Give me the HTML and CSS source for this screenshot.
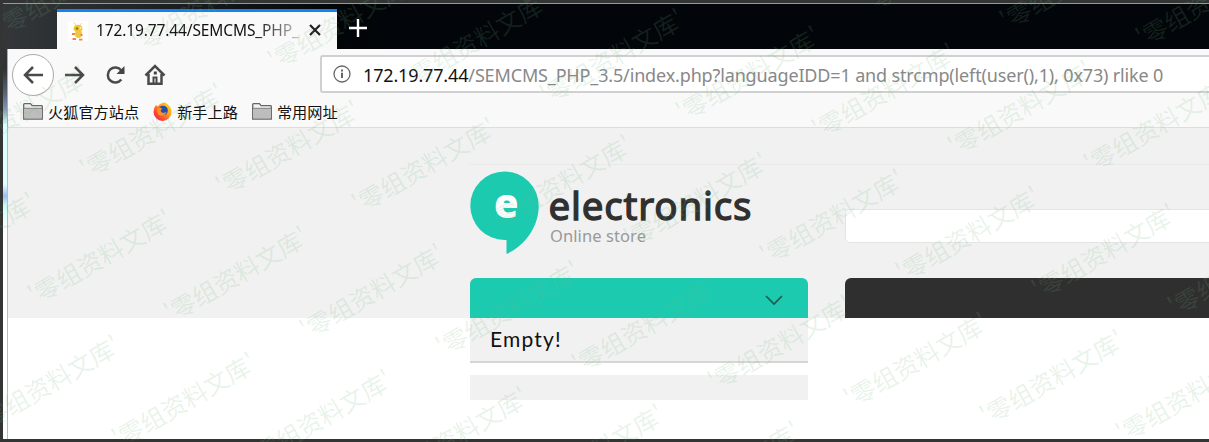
FILE: index.html
```html
<!DOCTYPE html>
<html lang="zh-CN">
<head>
<meta charset="utf-8">
<title>electronics</title>
<link rel="stylesheet" href="styles.css">
</head>
<body>
<div class="desktop">
  <div class="window">
    <div class="tabbar">
      <div class="tab">
        <svg class="favicon" width="20" height="20" viewBox="0 0 20 20">
          <rect width="20" height="20" fill="#fff"/>
          <path d="M8 5 6 1M11 5l3-3" stroke="#ddd6bb" fill="none"/>
          <ellipse cx="10" cy="7.500" rx="4.500" ry="3.800" fill="#f3c52f"/>
          <ellipse cx="10.500" cy="13" rx="3.500" ry="4" fill="#edc744"/>
          <circle cx="9" cy="7.500" r="1.300" fill="#8c7a20"/>
          <circle cx="12.500" cy="7" r="1" fill="#fff3b0"/>
          <path d="M4 13h3M12.500 14h2M4.500 18h3.500M11 18.700h3.500" stroke="#f08448" stroke-width="1.800"/>
        </svg>
        <span class="tab-title">172.19.77.44/SEMCMS_PHP_</span>
        <svg class="tab-close" width="14" height="14" viewBox="0 0 14 14"><path d="M2 2l10 10M12 2 2 12" stroke="#222" stroke-width="2.200"/></svg>
      </div>
      <svg class="newtab" width="18" height="18" viewBox="0 0 18 18"><path d="M9 0v18M0 9h18" stroke="#fff" stroke-width="2.400"/></svg>
    </div>
    <div class="toolbar">
      <div class="nav">
        <span class="back"><svg width="22" height="20" viewBox="0 0 22 20"><path d="M21 10H3M11 2 3 10l8 8" class="line"/></svg></span>
        <svg class="forward" width="22" height="20" viewBox="0 0 22 20"><path d="M1 10h18M11 2l8 8-8 8" class="line"/></svg>
        <svg class="reload" width="20" height="20" viewBox="0 0 20 20"><path d="M16.300 5.400A7.500 7.500 0 1 0 16.300 14.500" class="line"/><path d="M19.500 1v8h-8z" fill="#444"/></svg>
        <svg class="home" width="22" height="22" viewBox="0 0 22 22"><path d="M1.500 11.500 11 2l9.500 9.500M4.500 10v9.700h13V10" class="line"/><path d="M9.500 19v-5.500h3V19" class="line thin"/><rect x="9.800" y="7.500" width="3" height="3" fill="#444"/></svg>
      </div>
      <div class="urlbar">
        <svg width="18" height="18" viewBox="0 0 18 18"><circle cx="9" cy="9" r="8" fill="none" stroke="#666" stroke-width="1.300"/><path d="M9 7.700V13M9 4.500v2" stroke="#555" stroke-width="1.800"/></svg>
        <span class="url"><b>172.19.77.44</b>/SEMCMS_PHP_3.5/index.php?languageIDD=1 and strcmp(left(user(),1), 0x73) rlike 0</span>
      </div>
    </div>
    <div class="bookmarks">
      <span class="bm"><svg width="20" height="17" viewBox="0 0 20 17"><path d="M.7 16V1.500q0-.8.8-.8h6l1.500 2h9.500q.8 0 .8.800V16z" fill="#f2f2f2" stroke="#666" stroke-width="1.300"/><path d="M1.500 6h17v9.500h-17z" fill="#bdbdbd"/><path d="M1 5.300h18" stroke="#777"/></svg>火狐官方站点</span>
      <span class="bm fox"><svg width="19" height="19" viewBox="0 0 19 19"><defs><linearGradient id="fire" x1="1" y1="0" x2="0" y2="1"><stop offset="0" stop-color="#ffe226"/><stop offset=".4" stop-color="#ff9a1c"/><stop offset=".75" stop-color="#ff3b36"/><stop offset="1" stop-color="#e5217b"/></linearGradient></defs><path d="M3 3 4.500 4.500Q8 .5 12 .5q6.500 3.500 6.500 9.500A9 9 0 0 1 .5 10Q.5 6 3 3" fill="url(#fire)"/><circle cx="10" cy="8.500" r="4.800" fill="#234fa4"/><path d="M4.500 6q3-1.500 5 1-3 1-1 3t5-.5q-1.500 5-6 4T4.500 6" fill="#ff9025"/></svg>新手上路</span>
      <span class="bm"><svg width="20" height="17" viewBox="0 0 20 17"><path d="M.7 16V1.500q0-.8.8-.8h6l1.500 2h9.500q.8 0 .8.800V16z" fill="#f2f2f2" stroke="#666" stroke-width="1.300"/><path d="M1.500 6h17v9.500h-17z" fill="#bdbdbd"/><path d="M1 5.300h18" stroke="#777"/></svg>常用网址</span>
    </div>
    <div class="page">
      <div class="header">
        <div class="header-left">
          <svg class="logo" width="300" height="90" viewBox="0 0 300 90">
            <path d="M34.500 7.500a34.200 34.200 0 0 1 34.200 34.200C68.700 62 56 81 36.500 90V75.900h-2a34.200 34.200 0 0 1 0-68.400z" fill="#1ccab0"/>
            <text x="24" y="53.500" class="logo-e" textLength="24.500" lengthAdjust="spacingAndGlyphs">e</text>
            <text x="78.500" y="56" class="logo-name" textLength="203">electronics</text>
            <text x="80" y="77.500" class="logo-sub" textLength="96">Online store</text>
          </svg>
          <div class="category"><svg width="18" height="11" viewBox="0 0 18 11"><path d="M1 1l8 8 8-8" fill="none" stroke="#23594f" stroke-width="1.700"/></svg></div>
        </div>
        <div class="header-right">
          <div class="search"></div>
          <div class="menu"></div>
        </div>
      </div>
      <div class="content">
        <div class="empty">Empty!</div>
        <div class="strip"></div>
      </div>
    </div>
  </div>
</div>
<svg class="watermark" id="watermark" width="1209" height="442"></svg>
<script src="watermark.js"></script>
</body>
</html>
```
FILE: styles.css
```css
* { box-sizing: border-box; }
body { margin: 0; overflow: hidden; font-family: "Noto Sans", "Noto Sans CJK SC", sans-serif; }
.desktop { height: 442px; padding: 3px 0 3px 3px; background: #333534; }
.window {
  height: 436px; padding-left: 4px; display: flex; flex-direction: column;
  border-top: 1px solid #989a99;
  background: linear-gradient(#36393a 0, #303235 65px, #596778 90px, #8193b0 105px, #d9ffff 120px, #e6ffff 180px, #9fbdf0 192px, #ccfcfc 202px, #fff 225px);
  box-shadow: inset 0 1px #292c2d;
}
.tabbar {
  height: 45px; margin-left: -3px; padding: 5px 0 0 53px; display: flex;
  background: linear-gradient(90deg, #343739 0, #2c2f31 60px, #030608 330px, #020509 380px);
}
.tab {
  width: 280px; height: 40px; padding-left: 11px; display: flex; align-items: center;
  border-top: 3px solid #1284f0; background: #f9f9f9;
}
.favicon { flex: none; margin-top: 1px; }
.tab-title {
  width: 206px; margin-left: 8px; margin-top: -2px; overflow: hidden; white-space: nowrap;
  font-size: 15.500px; letter-spacing: -.12px; color: transparent;
  background: linear-gradient(90deg, #111 160px, #ccc 206px); background-clip: text;
}
.tab-close { flex: none; margin-left: 6px; margin-top: -1px; }
.newtab { margin: 10px 0 0 12px; }
.toolbar {
  height: 51px; display: flex; border-left: 1px solid #aaa;
  background: #f9f9f9;
}
.nav { width: 312px; padding-left: 4px; display: flex; align-items: center; }
.back {
  width: 42px; height: 42px; display: grid; place-items: center;
  border: 1px solid #aaa; border-radius: 50%; background: #fff;
}
.forward { margin-left: 10px; }
.reload { margin-left: 19px; }
.home { margin-left: 19px; }
.line { fill: none; stroke: #4a4a4a; stroke-width: 2.500px; }
.thin { stroke-width: 2px; }
.urlbar {
  flex: 1; height: 38px; margin-top: 6px; padding-left: 11px; display: flex; align-items: center;
  border: 2px solid #d0d0d0; border-right: 0; border-radius: 3px 0 0 3px; background: #fff;
}
.url { margin: 1px 0 0 12px; white-space: nowrap; font-size: 18px; letter-spacing: -.15px; color: #888; }
.url b { font-weight: 400; color: #111; }
.bookmarks {
  height: 28px; padding: 0 0 5px 15px; display: flex; gap: 14px; align-items: center;
  border-bottom: 1px solid #ddd; border-left: 1px solid #aaa; background: #f9f9f9;
  font: 15.200px/20px "Noto Sans CJK SC", sans-serif; color: #111;
}
.bm { display: flex; align-items: center; gap: 5px; white-space: nowrap; }
.page { flex: 1; border-left: 1px solid #bbb; background: #fff; }
.header { height: 190px; padding-left: 462px; display: flex; background: #f1f1f1; }
.header-left { width: 375px; padding-top: 36px; display: flex; flex-direction: column; justify-content: space-between; background: linear-gradient(#e9e9e9, #e9e9e9) 0 36px / 100% 1px no-repeat; }
.header-right { flex: 1; padding-top: 81px; background: linear-gradient(#e9e9e9, #e9e9e9) 0 36px / 100% 1px no-repeat; }
.logo { display: block; }
.logo-e { font: 800 40px "Open Sans", sans-serif; fill: #fff; }
.logo-name { font: 400 38.500px "Noto Sans", sans-serif; fill: #303030; stroke: #303030; stroke-width: 1.300px; }
.logo-sub { font: 16.500px "Noto Sans", sans-serif; fill: #999; }
.category {
  width: 338px; height: 40px; padding-right: 25px; display: flex; align-items: center; justify-content: flex-end;
  border-radius: 6px 6px 0 0; background: #1ccab0; padding-top: 5px;
}
.search { height: 34px; border: 1px solid #e4e4e4; border-right: 0; border-radius: 5px 0 0 5px; background: #fff; }
.menu { height: 40px; margin-top: 35px; border-radius: 6px 0 0; background: #2f2f2f; }
.content { width: 800px; padding-left: 462px; }
.empty {
  width: 338px; height: 45px; padding-left: 20px; border-bottom: 2px solid #d6d6d6; background: #f1f1f1;
  font: 21px/41px Lato, sans-serif; letter-spacing: 1.200px; color: #111;
}
.strip { width: 338px; height: 25px; margin-top: 12px; background: #f1f1f1; }
.watermark { position: absolute; left: 0; top: 0; pointer-events: none; }
.watermark text { font: 400 24.500px "Noto Sans CJK SC", sans-serif; fill: rgba(112, 180, 125, .16); }
```
FILE: watermark.js
```js
// Repeats the diagonal label over a slanted grid.
const layer = document.getElementById("watermark");
for (let row = -3; row <= 6; row++) {
  for (let col = -9; col <= 11; col++) {
    const x = 35.5 + col * 136 + row * 52;
    const y = 306 + col * 17.2 - row * 126;
    if (x < -145 || x > 1209 || y < 0 || y > 525) continue;
    const label = document.createElementNS("http://www.w3.org/2000/svg", "text");
    label.setAttribute("transform", `translate(${x} ${y}) rotate(-30)`);
    label.textContent = "'零组资料文库'";
    layer.appendChild(label);
  }
}
```
